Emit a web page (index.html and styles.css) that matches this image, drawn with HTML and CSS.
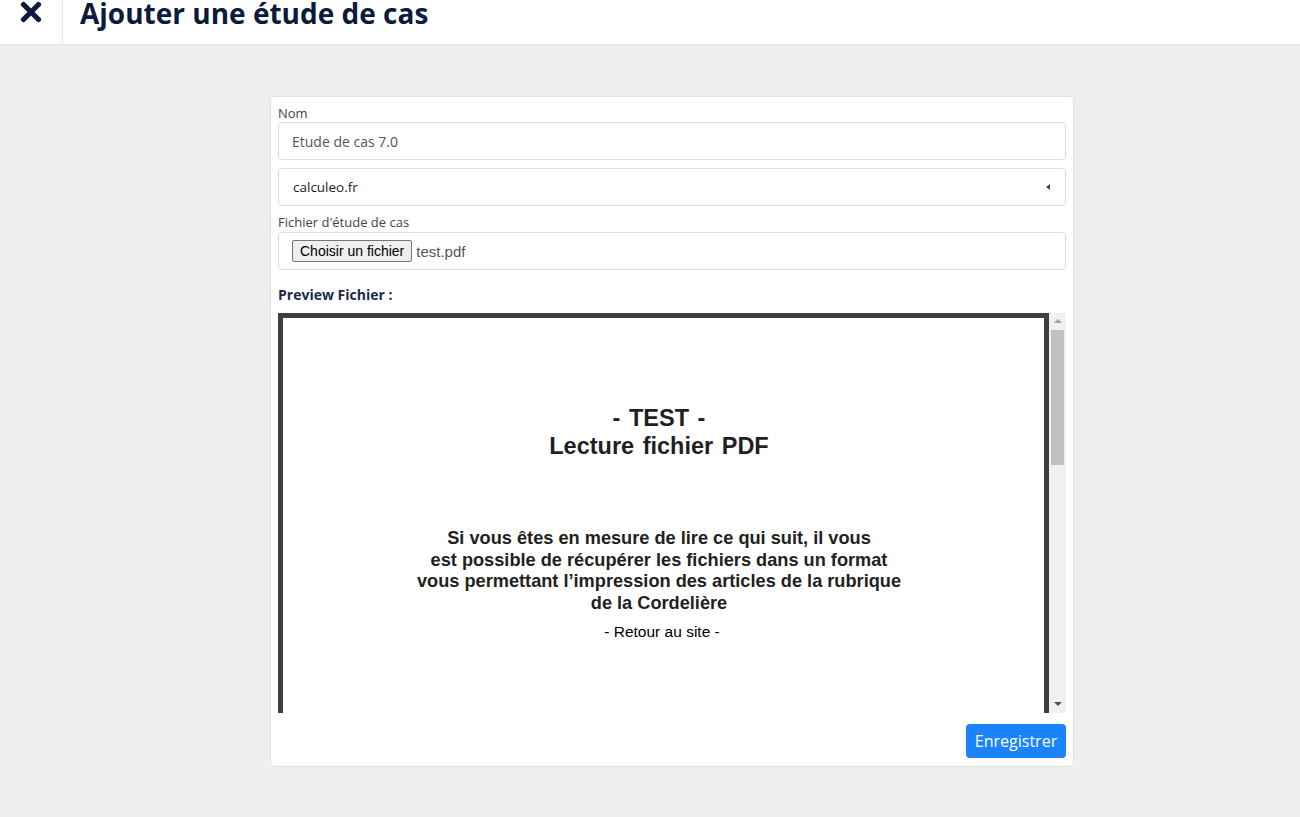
FILE: index.html
```html
<!DOCTYPE html>
<html lang="fr">
<head>
<meta charset="utf-8">
<title>Ajouter une étude de cas</title>
<link rel="stylesheet" href="styles.css">
</head>
<body>
<header class="topbar">
  <div class="close-cell">
    <svg class="close-icon" width="22" height="22" viewBox="0 0 22 22"><path d="M3.5 3.5 L18.5 18.5 M18.5 3.5 L3.5 18.5" stroke="#0c1a3c" stroke-width="5.2" stroke-linecap="round"/></svg>
  </div>
  <h1 class="title">Ajouter une étude de cas</h1>
</header>
<main class="page">
  <section class="card">
    <label class="label">Nom</label>
    <div class="field field-text">Etude de cas 7.0</div>
    <div class="field field-select"><span>calculeo.fr</span><span class="sel-arrow"></span></div>
    <label class="label label-file">Fichier d'étude de cas</label>
    <div class="field field-file"><span class="file-btn">Choisir un fichier</span><span class="file-name">test.pdf</span></div>
    <div class="preview-label">Preview Fichier :</div>
    <div class="preview">
      <div class="pdf">
        <div class="pdf-title">- TEST -<br>Lecture fichier PDF</div>
        <div class="pdf-body">Si vous êtes en mesure de lire ce qui suit, il vous<br>est possible de récupérer les fichiers dans un format<br>vous permettant l’impression des articles de la rubrique<br>de la Cordelière</div>
        <div class="pdf-link">- Retour au site -</div>
      </div>
      <div class="scrollbar">
        <span class="arrow-up"></span>
        <span class="thumb"></span>
        <span class="arrow-down"></span>
      </div>
    </div>
    <div class="actions"><button class="btn-save">Enregistrer</button></div>
  </section>
</main>
</body>
</html>
```
FILE: styles.css
```css
* { box-sizing: border-box; }
html, body { margin: 0; padding: 0; }
body {
  background: #efefef;
  font-family: "Open Sans", "Liberation Sans", sans-serif;
  color: #333;
  height: 817px;
  overflow: hidden;
}
.topbar {
  height: 45px;
  background: #fff;
  border-bottom: 1px solid #e6e6e6;
  display: flex;
  align-items: flex-start;
}
.close-cell {
  width: 63px;
  height: 44px;
  border-right: 1px solid #e6e6e6;
  display: flex;
  justify-content: center;
  padding-top: 1px;
  padding-right: 1px;
}
.close-icon { display: block; }
.title {
  margin: 0;
  padding-left: 17px;
  font-size: 28px;
  font-weight: 700;
  line-height: 28px;
  color: #0c1a3c;
  margin-top: -1px;
}
.page {
  padding: 51px 0 0 270px;
}
.card {
  width: 804px;
  background: #fff;
  border: 1px solid #e3e3e3;
  border-radius: 4px;
  padding: 8px 7px 8px;
}
.label {
  display: block;
  font-size: 13px;
  line-height: 17px;
  color: #444;
  margin-bottom: 0;
}
.label-file { margin-top: 8px; margin-bottom: 1px; }
.field {
  height: 38px;
  border: 1px solid #dcdcdc;
  border-radius: 4px;
  display: flex;
  align-items: center;
  padding: 0 13px;
}
.field-text { font-size: 14px; color: #555; }
.field-select {
  margin-top: 8px;
  font-size: 13.5px;
  color: #222;
  justify-content: space-between;
  padding-left: 14px;
  padding-right: 15px;
}
.sel-arrow {
  width: 0; height: 0;
  border-top: 3px solid transparent;
  border-bottom: 3px solid transparent;
  border-right: 4px solid #444;
}
.field-file { font-family: "Liberation Sans", Arial, sans-serif; font-size: 14px; }
.file-btn {
  display: inline-block;
  height: 22px;
  line-height: 20px;
  padding: 0 7px;
  border: 1px solid #767676;
  border-radius: 2px;
  background: #efefef;
  color: #000;
}
.file-name { margin-left: 4px; color: #555; font-size: 15px; }
.preview-label {
  margin-top: 16px;
  font-size: 14px;
  font-weight: 700;
  line-height: 18px;
  color: #1b2a4a;
}
.preview {
  margin-top: 9px;
  height: 400px;
  display: flex;
}
.pdf {
  flex: 1;
  border: 5px solid #3c3f44;
  border-bottom: 0;
  background: #fff;
  text-align: center;
  color: #231f20;
  font-family: "Liberation Sans", Arial, sans-serif;
  padding-top: 86px;
  padding-right: 9px;
}
.pdf-title {
  font-size: 23.5px;
  font-weight: 700;
  line-height: 28px;
  word-spacing: 2px;
}
.pdf-body {
  margin-top: 68px;
  font-size: 18.2px;
  font-weight: 700;
  line-height: 21.5px;
}
.pdf-link {
  margin-top: 8px;
  margin-left: 6px;
  font-size: 15.5px;
  line-height: 20px;
  color: #000;
}
.scrollbar {
  width: 17px;
  background: #f1f1f1;
  display: flex;
  flex-direction: column;
  align-items: center;
}
.arrow-up {
  margin-top: 6px;
  width: 0; height: 0;
  border-left: 4px solid transparent;
  border-right: 4px solid transparent;
  border-bottom: 4px solid #a3a3a3;
}
.thumb {
  margin-top: 7px;
  width: 13px;
  height: 135px;
  background: #c1c1c1;
}
.arrow-down {
  margin-top: auto;
  margin-bottom: 7px;
  width: 0; height: 0;
  border-left: 4px solid transparent;
  border-right: 4px solid transparent;
  border-top: 4px solid #505050;
}
.actions {
  display: flex;
  justify-content: flex-end;
  margin-top: 11px;
}
.btn-save {
  height: 34px;
  width: 100px;
  border: 0;
  border-radius: 4px;
  background: #1a84ff;
  color: #fff;
  font-family: "Open Sans", sans-serif;
  font-size: 16px;
  padding: 0;
}
```
